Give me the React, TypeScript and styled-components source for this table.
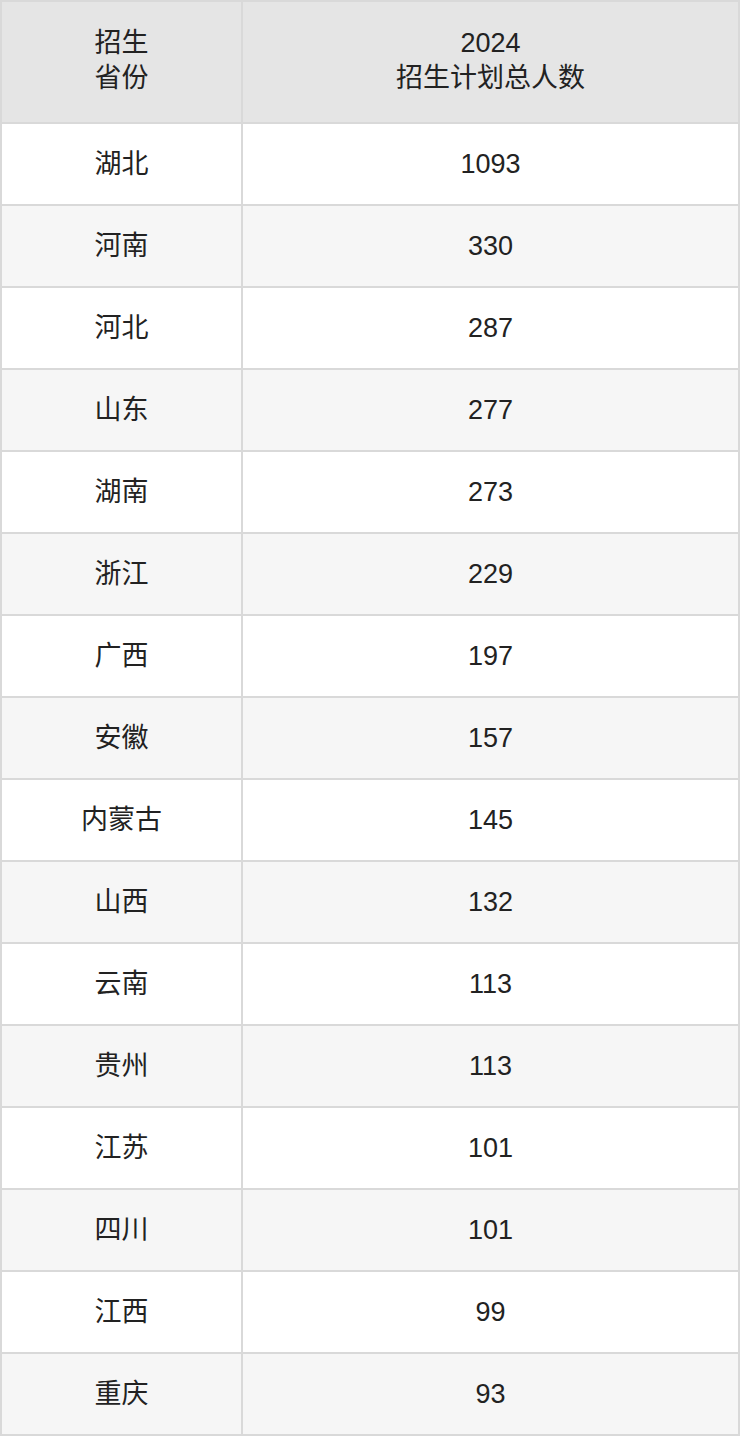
import React from 'react'
import styled, { createGlobalStyle } from 'styled-components'

const GlobalStyle = createGlobalStyle`
  html, body {
    margin: 0;
    padding: 0;
    background: #ffffff;
  }
  body {
    font-family: 'Liberation Sans', Arial, 'Noto Sans CJK SC', sans-serif;
    color: #222222;
  }
`

const Table = styled.div`
  display: grid;
  grid-template-columns: 239px 1fr;
  gap: 2px;
  padding: 2px;
  width: 740px;
  box-sizing: border-box;
  background-color: #d9d9d9;
`

const Cell = styled.div<{ $head?: boolean; $shade?: boolean }>`
  display: flex;
  align-items: center;
  justify-content: center;
  text-align: center;
  height: ${({ $head }) => ($head ? '120px' : '80px')};
  padding-bottom: ${({ $head }) => ($head ? '3px' : '0')};
  box-sizing: border-box;
  font-size: 27px;
  line-height: 35px;
  background-color: ${({ $head, $shade }) =>
    $head ? '#e5e5e5' : $shade ? '#f6f6f6' : '#ffffff'};
`

const rows: [string, number][] = [
  ['湖北', 1093],
  ['河南', 330],
  ['河北', 287],
  ['山东', 277],
  ['湖南', 273],
  ['浙江', 229],
  ['广西', 197],
  ['安徽', 157],
  ['内蒙古', 145],
  ['山西', 132],
  ['云南', 113],
  ['贵州', 113],
  ['江苏', 101],
  ['四川', 101],
  ['江西', 99],
  ['重庆', 93],
]

export default function App() {
  return (
    <>
      <GlobalStyle />
      <Table>
        <Cell $head>
          招生
          <br />
          省份
        </Cell>
        <Cell $head>
          2024
          <br />
          招生计划总人数
        </Cell>
        {rows.map(([name, count], i) => (
          <React.Fragment key={name + i}>
            <Cell $shade={i % 2 === 1}>{name}</Cell>
            <Cell $shade={i % 2 === 1}>{count}</Cell>
          </React.Fragment>
        ))}
      </Table>
    </>
  )
}
